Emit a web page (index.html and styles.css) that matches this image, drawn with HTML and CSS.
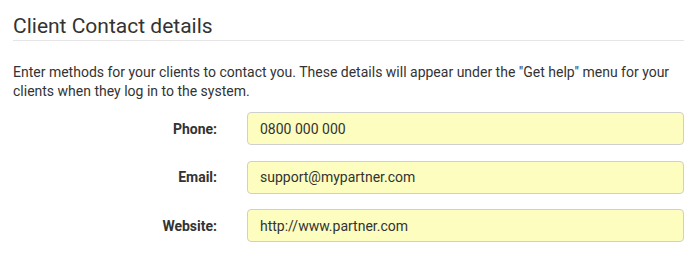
FILE: index.html
```html
<!DOCTYPE html>
<html>
<head>
<meta charset="utf-8">
<link rel="stylesheet" href="styles.css">
</head>
<body>
<div class="panel">
  <h2 class="title">Client Contact details</h2>
  <p class="intro">Enter methods for your clients to contact you. These details will appear under the "Get help" menu for your clients when they log in to the system.</p>
  <form class="form">
    <label class="label" for="phone">Phone:</label>
    <input class="field" id="phone" type="text" value="0800 000 000">
    <label class="label" for="email">Email:</label>
    <input class="field" id="email" type="text" value="support@mypartner.com">
    <label class="label" for="web">Website:</label>
    <input class="field" id="web" type="text" value="http://www.partner.com">
  </form>
</div>
</body>
</html>
```
FILE: styles.css
```css
html, body {
  margin: 0;
  padding: 0;
  background: #fff;
}
body {
  font-family: Roboto, "Liberation Sans", sans-serif;
  color: #333;
  font-size: 14px;
}
.panel {
  width: 671px;
  padding: 15px 0 0 13px;
}
.title {
  margin: 0;
  font-size: 21px;
  font-weight: 400;
  line-height: 22px;
  padding-bottom: 3px;
  border-bottom: 1px solid #e5e5e5;
  color: #333;
}
.intro {
  margin: 22px 0 11px;
  line-height: 19px;
}
.form {
  display: grid;
  grid-template-columns: 204px 1fr;
  column-gap: 30px;
  row-gap: 15.5px;
  align-items: center;
}
.label {
  text-align: right;
  font-weight: 700;
  color: #333;
}
.field {
  box-sizing: border-box;
  height: 33px;
  width: 100%;
  margin: 0;
  padding: 0 12px;
  border: 1px solid #cfcfcf;
  border-radius: 4px;
  background: #fdfdbf;
  font-family: Roboto, "Liberation Sans", sans-serif;
  font-size: 14px;
  color: #333;
  outline: none;
}
```
